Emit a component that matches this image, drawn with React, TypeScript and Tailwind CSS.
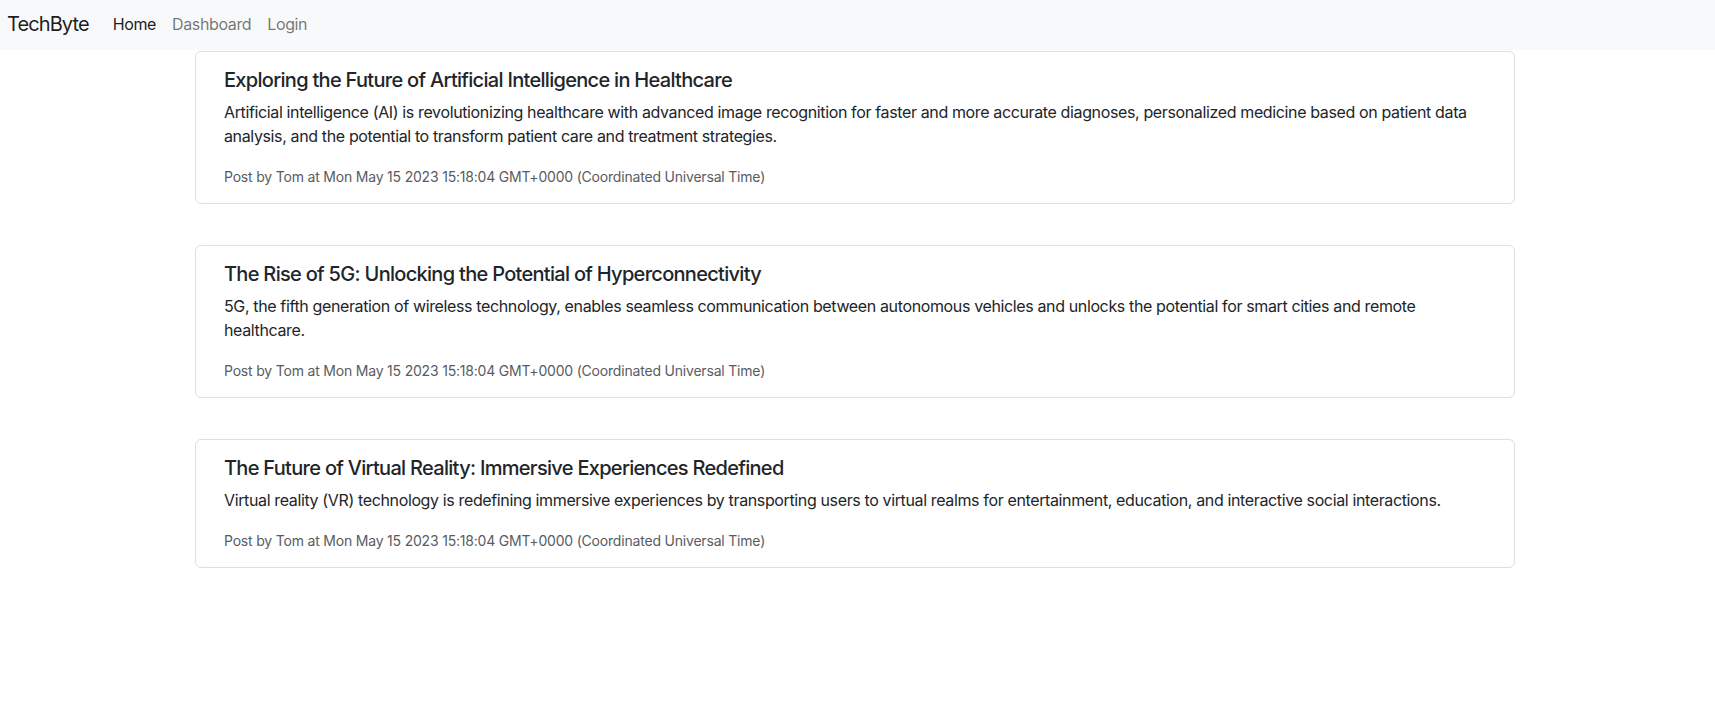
import React from "react"

type Post = {
  id: number
  title: string
  body: string
  author: string
  date: string
}

const posts: Post[] = [
  {
    id: 1,
    title: "Exploring the Future of Artificial Intelligence in Healthcare",
    body: "Artificial intelligence (AI) is revolutionizing healthcare with advanced image recognition for faster and more accurate diagnoses, personalized medicine based on patient data analysis, and the potential to transform patient care and treatment strategies.",
    author: "Tom",
    date: "Mon May 15 2023 15:18:04 GMT+0000 (Coordinated Universal Time)",
  },
  {
    id: 2,
    title: "The Rise of 5G: Unlocking the Potential of Hyperconnectivity",
    body: "5G, the fifth generation of wireless technology, enables seamless communication between autonomous vehicles and unlocks the potential for smart cities and remote healthcare.",
    author: "Tom",
    date: "Mon May 15 2023 15:18:04 GMT+0000 (Coordinated Universal Time)",
  },
  {
    id: 3,
    title: "The Future of Virtual Reality: Immersive Experiences Redefined",
    body: "Virtual reality (VR) technology is redefining immersive experiences by transporting users to virtual realms for entertainment, education, and interactive social interactions.",
    author: "Tom",
    date: "Mon May 15 2023 15:18:04 GMT+0000 (Coordinated Universal Time)",
  },
]

function PostCard({ post }: { post: Post }) {
  return (
    <div className="rounded-[6px] border border-[#dcdfe3] bg-white px-[28px] py-4">
      <h5 className="mb-2 text-[20px] leading-[24px] font-medium tracking-[-0.035em] text-[#212529]">
        {post.title}
      </h5>
      <p className="mb-[18px] text-[16px] leading-[24px] tracking-[-0.023em] text-[#212529]">{post.body}</p>
      <p className="text-[14px] leading-[21px] tracking-[-0.014em] text-[#595c5f]">
        Post by {post.author} at {post.date}
      </p>
    </div>
  )
}

export default function App() {
  return (
    <div className="min-h-screen bg-white font-['Inter','Liberation_Sans',sans-serif]">
      {/* Navbar */}
      <nav className="flex h-[50px] items-center bg-[#f8f9fa] pl-[7px]">
        <a href="#" className="mr-4 pb-[2px] text-[20px] leading-[30px] tracking-[-0.045em] text-black/90">
          TechByte
        </a>
        <ul className="flex items-center pb-[2px] text-[16px] leading-[24px] tracking-[-0.023em]">
          <li>
            <a href="#" className="px-2 text-black/90">Home</a>
          </li>
          <li>
            <a href="#" className="px-2 text-black/55">Dashboard</a>
          </li>
          <li>
            <a href="#" className="px-2 text-black/55">Login</a>
          </li>
        </ul>
      </nav>

      {/* Posts */}
      <main className="ml-[195px] mt-px flex w-[1320px] flex-col gap-[41px]">
        {posts.map((post) => (
          <PostCard key={post.id} post={post} />
        ))}
      </main>
    </div>
  )
}
